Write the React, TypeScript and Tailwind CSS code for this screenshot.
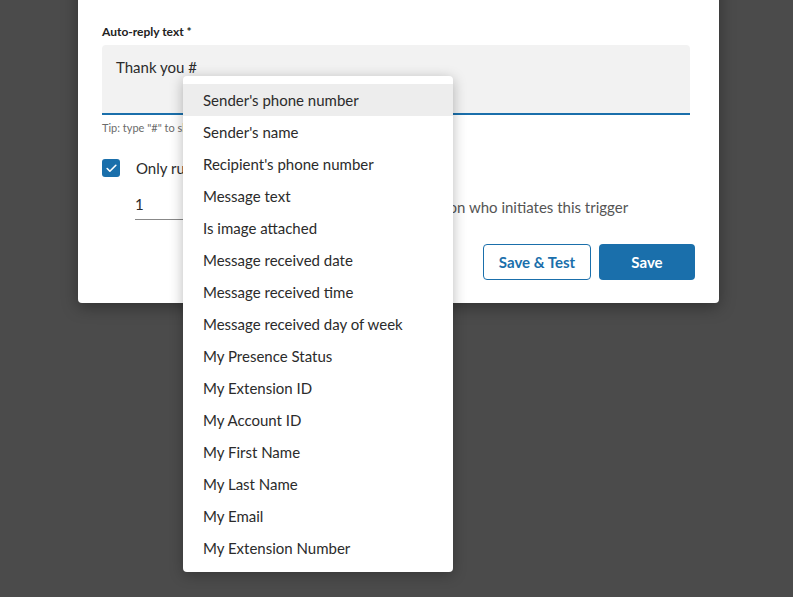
import { Check } from 'lucide-react';

const variables = [
  "Sender's phone number",
  "Sender's name",
  "Recipient's phone number",
  'Message text',
  'Is image attached',
  'Message received date',
  'Message received time',
  'Message received day of week',
  'My Presence Status',
  'My Extension ID',
  'My Account ID',
  'My First Name',
  'My Last Name',
  'My Email',
  'My Extension Number',
];

export default function App() {
  return (
    <div
      className="h-[597px] w-full overflow-hidden bg-[#4b4b4b] text-[#2b2b2b]"
      style={{ fontFamily: 'Lato, "Open Sans", sans-serif' }}
    >
      <div className="relative -mt-[21px] ml-[78px] w-[641px] rounded-[4px] bg-white px-6 pb-[23px] pt-0 shadow-[0_4px_16px_rgba(0,0,0,0.35)]">
        <p className="h-[20px] text-[13px] leading-[20px] text-[#666]">
          Send an automatic reply to incoming text messages using the template below
        </p>

        <div className="mt-[25px] text-[12px] font-bold leading-[16px] text-[#222]">Auto-reply text *</div>

        <div className="relative mt-[5px]">
          <div className="h-[70px] w-[588px] rounded-t-[4px] border-b-2 border-[#1a6fab] bg-[#f2f2f2] px-[14px] pt-[12px] text-[15px] leading-[20px] text-[#2b2b2b]">
            Thank you #
          </div>

          <div className="absolute left-[81px] top-[31px] z-10 w-[270px] rounded-[4px] bg-white py-[8px] shadow-[0_3px_14px_rgba(0,0,0,0.28)]">
            {variables.map((v, i) => (
              <div
                key={v}
                className={`h-[32px] px-[20px] text-[15px] leading-[32px] text-[#2b2b2b] ${i === 0 ? 'bg-[#ededed]' : ''}`}
              >
                {v}
              </div>
            ))}
          </div>
        </div>

        <div className="mt-[6px] text-[11px] leading-[14px] text-[#6b6b6b]">
          Tip: type "#" to show the variables you can insert into the message
        </div>

        <div className="mt-[23px] flex items-center gap-[16px]">
          <div className="flex h-[18px] w-[18px] items-center justify-center rounded-[3px] bg-[#1a6fab]">
            <Check className="h-[13px] w-[13px] text-white" strokeWidth={3} />
          </div>
          <span className="text-[15px] leading-[20px] text-[#2b2b2b]">Only run this trigger once within</span>
        </div>

        <div className="mt-[16px] flex items-end pl-[33px]">
          <div className="w-[50px] border-b border-[#888] pb-[5px] text-[15px] leading-[20px] text-[#2b2b2b]">1</div>
          <div className="ml-[16px] w-[154px] border-b border-[#888] pb-[5px] text-[15px] leading-[20px]">hours</div>
          <span className="ml-[8px] pb-[3px] text-[15px] leading-[20px] text-[#555]">for each person who initiates this trigger</span>
        </div>

        <div className="mt-[24px] flex justify-end gap-[8px]">
          <button className="h-[36px] w-[108px] rounded-[4px] border border-[#1a6fab] bg-white text-[15px] font-bold text-[#1a6fab]">
            Save &amp; Test
          </button>
          <button className="h-[36px] w-[96px] rounded-[4px] bg-[#1a6fab] text-[15px] font-bold text-white">
            Save
          </button>
        </div>
      </div>
    </div>
  );
}
